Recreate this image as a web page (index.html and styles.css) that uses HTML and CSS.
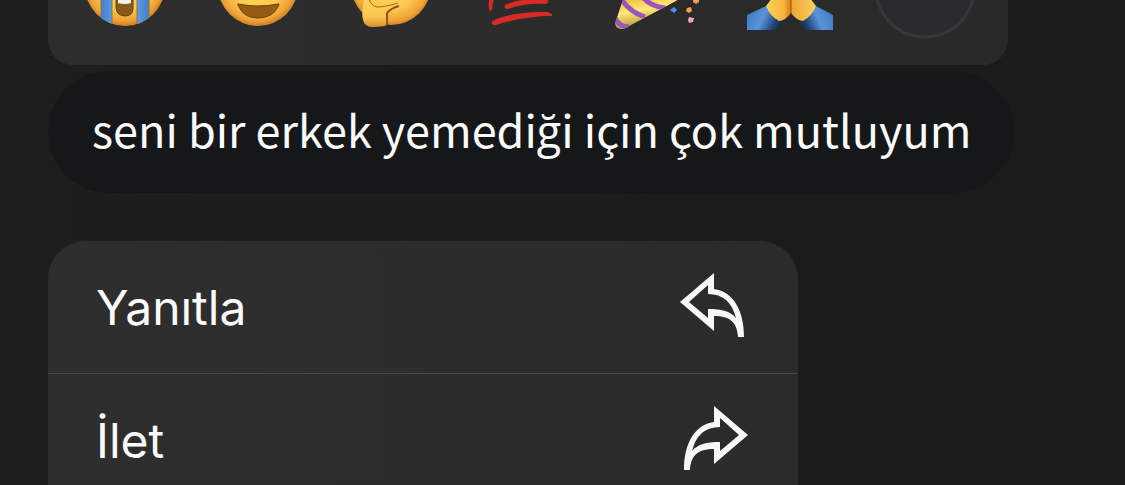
FILE: index.html
```html
<!DOCTYPE html>
<html lang="tr">
<head>
<meta charset="utf-8">
<meta name="viewport" content="width=device-width, initial-scale=1">
<title>Mesaj</title>
<link rel="stylesheet" href="styles.css">
</head>
<body>
<main class="screen">
  <div class="reactions">
    <button class="reaction" aria-label="Ağlama">
      <svg viewBox="0 0 100 40">
        <defs>
          <radialGradient id="face" gradientUnits="userSpaceOnUse" cx="50" cy="-17" r="44">
            <stop offset="0" stop-color="#ffe36b"/><stop offset=".6" stop-color="#fbc84c"/><stop offset=".85" stop-color="#efa438"/><stop offset="1" stop-color="#c97720"/>
          </radialGradient>
          <linearGradient id="tear"><stop offset="0" stop-color="#3f7fd2"/><stop offset=".5" stop-color="#83b9f5"/><stop offset="1" stop-color="#3f7dce"/></linearGradient>
          <clipPath id="faceClip"><circle cx="51" cy="-14" r="40"/></clipPath>
        </defs>
        <circle cx="51" cy="-14" r="40" fill="url(#face)"/>
        <g clip-path="url(#faceClip)">
          <path d="M27 0H38V27H27Z M63 0H75V27H63Z" fill="url(#tear)"/>
          <path d="M27 0V20M38 0V27M63 0V27M75 0V20" stroke="#8f7540" fill="none"/>
        </g>
        <path d="M42 0H59V8Q59 16 51 16T42 8Z" fill="#8a5a17" stroke="#6b3f0a"/>
        <path d="M44 0H57V3Q51 5 44 3Z" fill="#f4f3f1"/>
      </svg>
    </button>
    <button class="reaction" aria-label="Gülümseme">
      <svg viewBox="0 0 100 40">
        <circle cx="51" cy="-14" r="40" fill="url(#face)"/>
        <path d="M31 4Q51 8 71 4Q73 3 71 7Q65 18 51 18T32 7Q30 3 31 4Z" fill="#945c14" stroke="#704009"/>
      </svg>
    </button>
    <button class="reaction" aria-label="Düşünme">
      <svg viewBox="0 0 100 40">
        <defs><linearGradient id="hand" x2="0" y2="1"><stop offset="0" stop-color="#ffd45b"/><stop offset=".65" stop-color="#fbc550"/><stop offset="1" stop-color="#d98d29"/></linearGradient></defs>
        <circle cx="50" cy="-15" r="40" fill="url(#face)"/>
        <path d="M24 -2Q20 12 22 20Q24 28 34 27L44 26Q47 24 46 20V13Q52 9 57 7Q60 5 57 3L41 6Q34 7 32 5Q29 3 28 -2Z" fill="url(#hand)"/>
        <path d="M28 -1Q30 6 36 7Q44 7 57 3" fill="none" stroke="#a96514" stroke-width="1"/>
        <path d="M58 6Q50 8 46 13V25" fill="none" stroke="#8d5413" stroke-width="2"/>
      </svg>
    </button>
    <button class="reaction" aria-label="Yüz puan">
      <svg viewBox="0 0 100 40">
        <path d="M16 -2Q13 6 16 11L18 10Q18 2 21 -2Z" fill="#d92b25"/>
        <path d="M31 5Q45 -2 73 -1Q76 2 72 4Q50 3 34 9Q30 9 31 5Z" fill="#d92b25"/>
        <path d="M18 21Q40 11 72 12Q79 13 78 16Q50 16 22 25Q17 26 18 21Z" fill="#d92b25"/>
      </svg>
    </button>
    <button class="reaction" aria-label="Kutlama">
      <svg viewBox="0 0 100 40">
        <defs>
          <linearGradient id="cone" x1="0" y1="0" x2=".4" y2="1"><stop offset="0" stop-color="#e8b936"/><stop offset=".45" stop-color="#ffe978"/><stop offset="1" stop-color="#a8852a"/></linearGradient>
          <clipPath id="coneClip"><path d="M16 -1L8 23Q8 30 17 29L73 -1Z"/></clipPath>
        </defs>
        <g clip-path="url(#coneClip)">
          <path d="M16 -1L8 23Q8 30 17 29L73 -1Z" fill="url(#cone)"/>
          <path d="M8 18Q12 27 22 27M15 0Q23 12 38 17M35 -4Q42 6 58 8" fill="none" stroke="#9c55c0" stroke-width="5"/>
        </g>
        <path d="M63 10L67 7L70 10L67 13Z" fill="#4f91ed"/>
        <path d="M80 8L84 7L85 11L82 13L79 11Z" fill="#f0a443"/>
        <path d="M86 -1H92V2L89 4L86 2Z" fill="#e9a063"/>
        <path d="M82 17L87 18L86 22L82 23L81 20Z" fill="#f2a1cc"/>
      </svg>
    </button>
    <button class="reaction" aria-label="Teşekkür">
      <svg viewBox="0 0 100 40">
        <defs>
          <linearGradient id="sleeveL" x2="1" y2=".3"><stop offset="0" stop-color="#3b73bd"/><stop offset=".5" stop-color="#5b93da"/><stop offset=".85" stop-color="#1d416f"/><stop offset="1" stop-color="#1f2a38"/></linearGradient>
          <linearGradient id="sleeveR" x1="1" x2="0" y2=".3"><stop offset="0" stop-color="#3b73bd"/><stop offset=".5" stop-color="#5b93da"/><stop offset=".85" stop-color="#1d416f"/><stop offset="1" stop-color="#1f2a38"/></linearGradient>
          <linearGradient id="palms"><stop offset="0" stop-color="#ffd05a"/><stop offset=".35" stop-color="#f9b83d"/><stop offset=".48" stop-color="#d88423"/><stop offset=".5" stop-color="#9d570c"/><stop offset=".52" stop-color="#eba738"/><stop offset="1" stop-color="#ffd05a"/></linearGradient>
        </defs>
        <path d="M6 15L25 6L38 21L46 17Q42 26 34 30H6Z" fill="url(#sleeveL)"/>
        <path d="M92 15L75 6L62 21L54 17Q58 26 66 30H92Z" fill="url(#sleeveR)"/>
        <path d="M31 -2L25 6Q29 16 38 21Q45 20 50 13Q55 20 62 21Q71 16 75 6L69 -2Z" fill="url(#palms)"/>
      </svg>
    </button>
    <button class="reaction" aria-label="Diğer tepkiler">
      <svg viewBox="0 0 100 40"><circle cx="51" cy="-12" r="49" fill="#2a2b2d" stroke="#35373b" stroke-width="3"/></svg>
    </button>
  </div>

  <p class="message">seni bir erkek yemediği için çok mutluyum</p>

  <div class="menu">
    <button class="item">
      <span>Yanıtla</span>
      <svg class="icon" viewBox="0 0 68 68" aria-hidden="true"><path fill-rule="evenodd" d="M0 29L34 0V16C54 19 64 38 64 64H58C57 49 50 43 34 43V58Z M9 29L28 45V36C42 36 50 38 56 45C52 29 43 21 28 21V12Z"/></svg>
    </button>
    <button class="item">
      <span>İlet</span>
      <svg class="icon" viewBox="0 0 68 68" aria-hidden="true"><path fill-rule="evenodd" d="M68 29L34 0V16C14 19 4 38 4 64H10C11 49 18 43 34 43V58Z M59 29L40 45V36C26 36 18 38 12 45C16 29 25 21 40 21V12Z"/></svg>
    </button>
  </div>
</main>
</body>
</html>
```
FILE: styles.css
```css
* {
  box-sizing: border-box;
}

body {
  margin: 0;
  background: #1b1b1b;
  color: #fafafa;
}

.screen {
  display: flex;
  flex-direction: column;
  align-items: flex-start;
  height: 100vh;
  padding: 0 110px 0 48px;
  overflow: hidden;
  background: linear-gradient(90deg, #1e1e1f, #1b1b1b 60%);
}

button {
  margin: 0;
  border: 0;
  background: none;
  color: inherit;
}

.reactions {
  display: grid;
  grid-template-columns: repeat(7, 1fr);
  flex: none;
  align-self: stretch;
  margin-right: 7px;
  padding: 0 17px 25px 9px;
  border-radius: 0 0 26px 26px;
  background: linear-gradient(90deg, #2e2e2e, #292929);
}

.reaction {
  display: flex;
  justify-content: center;
  padding: 0;
}

.reaction svg {
  width: 100px;
  height: 40px;
  overflow: visible;
}

.message {
  flex: none;
  margin: 6px 0 48px;
  padding: 23px 42px 29px 44px;
  border-radius: 61px;
  background: #161719;
  font: 45px/70px "Noto Sans CJK SC", "Open Sans", sans-serif;
  white-space: nowrap;
}

.menu {
  flex: none;
  width: 100%;
  max-width: 750px;
  border-radius: 38px 38px 0 0;
  background: linear-gradient(90deg, #2e2e2e, #2b2b2c);
}

.item {
  display: flex;
  align-items: center;
  justify-content: space-between;
  width: 100%;
  padding: 32px 50px 32px 48px;
  font: 48px/68px Inter, sans-serif;
}

.item span {
  padding-top: 2px;
  line-height: 64px;
}

.item + .item {
  border-top: 1px solid #464647;
}

.icon {
  width: 68px;
  height: 68px;
  fill: #f7f7f7;
}
```
